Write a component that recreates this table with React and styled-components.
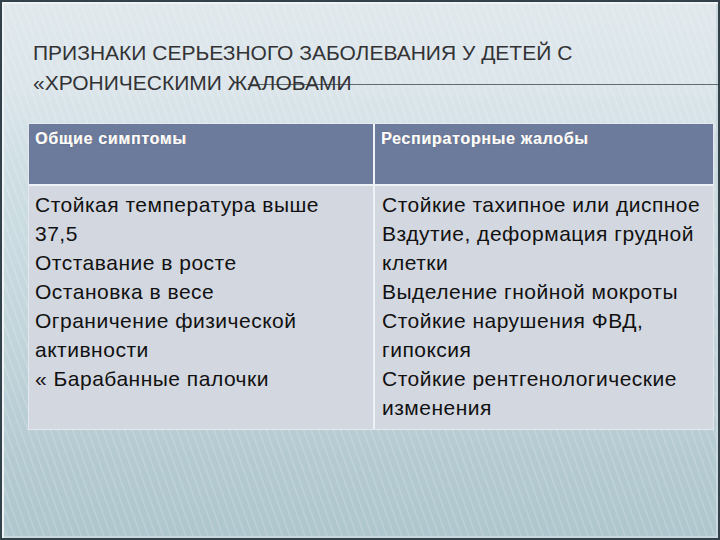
import React from "react";
import styled, { createGlobalStyle } from "styled-components";

const GlobalStyle = createGlobalStyle`
  html, body {
    margin: 0;
    padding: 0;
    background: #2f3a40;
  }
  * {
    box-sizing: border-box;
  }
`;

const Slide = styled.div`
  width: 720px;
  height: 540px;
  display: flex;
  flex-direction: column;
  padding: 0 6px 0 26px;
  border: 2px solid #33414a;
  box-shadow: inset 2px 2px 0 #eef3f5, inset -2px -2px 0 #c9d8dd;
  background:
    repeating-linear-gradient(
      70deg,
      rgba(255, 255, 255, 0) 0px,
      rgba(255, 255, 255, 0) 4px,
      rgba(255, 255, 255, 0.18) 5px,
      rgba(255, 255, 255, 0) 7px
    ),
    linear-gradient(
      180deg,
      #e0e8ec 0%,
      #dbe5ea 16%,
      #cfdfe4 30%,
      #c3d6dc 60%,
      #b4cad1 85%,
      #aec6cd 100%
    );
  overflow: hidden;
`;

const Title = styled.h1`
  position: relative;
  margin: 36px 0 0 5px;
  font-family: "Liberation Sans", Arial, sans-serif;
  font-weight: normal;
  font-size: 21px;
  line-height: 30px;
  color: #333336;

  &::before {
    content: "";
    position: absolute;
    left: 215px;
    right: -8px;
    top: 46px;
    height: 1px;
    background: #5f6a72;
    z-index: 0;
  }

  span {
    position: relative;
    z-index: 1;
  }
`;

const Table = styled.div`
  margin-top: 25px;
  width: 686px;
  display: grid;
  grid-template-columns: 344px 1fr;
  grid-template-rows: 60px 243px;
  gap: 2px;
  background: #eef1f5;
  border: 1px solid #e4e8ee;
`;

const HeadCell = styled.div`
  background: #6c7a9c;
  color: #ffffff;
  font-family: "Liberation Sans", Arial, sans-serif;
  font-weight: bold;
  font-size: 16px;
  line-height: 18px;
  letter-spacing: 0.7px;
  padding: 6px 6px 0;
  text-shadow: 0 0 1px #3d4560, 0.4px 0 0 #ffffff;
`;

const BodyCell = styled.div`
  background: #d3d7e0;
  color: #111111;
  font-family: "Liberation Sans", Arial, sans-serif;
  font-size: 21px;
  line-height: 29px;
  letter-spacing: 0.5px;
  padding: ${(p) => (p.$right ? "4px 6px 0 7px" : "4px 6px 0 6px")};
`;

const Line = styled.div`
  white-space: nowrap;
`;

const left = [
  "Стойкая температура выше",
  "37,5",
  "Отставание в росте",
  "Остановка в весе",
  "Ограничение физической",
  "активности",
  "« Барабанные палочки",
];

const right = [
  "Стойкие тахипное или диспное",
  "Вздутие, деформация грудной",
  "клетки",
  "Выделение гнойной мокроты",
  "Стойкие нарушения ФВД,",
  "гипоксия",
  "Стойкие рентгенологические",
  "изменения",
];

export default function App() {
  return (
    <>
      <GlobalStyle />
      <Slide>
        <Title>
          <span>
            ПРИЗНАКИ СЕРЬЕЗНОГО ЗАБОЛЕВАНИЯ У ДЕТЕЙ С
            <br />
            «ХРОНИЧЕСКИМИ ЖАЛОБАМИ
          </span>
        </Title>
        <Table>
          <HeadCell>Общие симптомы</HeadCell>
          <HeadCell>Респираторные жалобы</HeadCell>
          <BodyCell>
            {left.map((t, i) => (
              <Line key={i}>{t}</Line>
            ))}
          </BodyCell>
          <BodyCell $right>
            {right.map((t, i) => (
              <Line key={i}>{t}</Line>
            ))}
          </BodyCell>
        </Table>
      </Slide>
    </>
  );
}
